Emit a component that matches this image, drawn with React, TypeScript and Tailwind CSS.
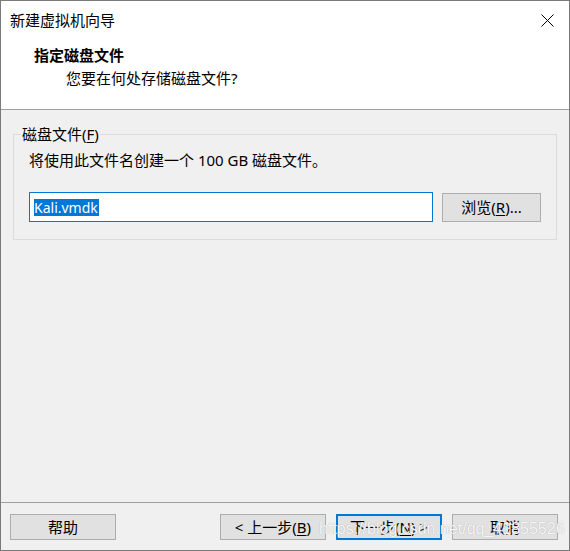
import React from 'react'

const font = "font-['Noto_Sans','Noto_Sans_CJK_SC',sans-serif]"

function Mn({ children }: { children: React.ReactNode }) {
  return <span className="underline underline-offset-2">{children}</span>
}

function Btn({ children, primary }: { children: React.ReactNode; primary?: boolean }) {
  return (
    <button
      className={
        primary
          ? 'w-[106px] h-[26px] bg-[#e1e1e1] border-2 border-[#0078d7] text-[15px] leading-none text-black flex items-center justify-center'
          : 'w-[106px] h-[26px] bg-[#e1e1e1] border border-[#adadad] text-[15px] leading-none text-black flex items-center justify-center'
      }
    >
      {children}
    </button>
  )
}

export default function App() {
  return (
    <div className={`${font} relative w-[570px] h-[551px] border border-[#7a7a7a] bg-[#f0f0f0] flex flex-col text-black`}>
      {/* header */}
      <div className="bg-white h-[109px] border-b border-[#a0a0a0] flex flex-col shrink-0">
        <div className="h-[38px] flex items-center justify-between pl-[9px] pr-[15px]">
          <span className="text-[15px] leading-5">新建虚拟机向导</span>
          <svg width="13" height="13" viewBox="0 0 13 13" className="mt-[1px]">
            <path d="M0.5 0.5 L12.5 12.5 M12.5 0.5 L0.5 12.5" stroke="#000" strokeWidth="1" />
          </svg>
        </div>
        <div className="mt-[6px] pl-[33px] text-[15px] leading-5 font-bold">指定磁盘文件</div>
        <div className="mt-[3px] pl-[65px] text-[15px] leading-5">您要在何处存储磁盘文件?</div>
      </div>

      {/* body */}
      <div className="flex-1 px-[12px] pt-[24px]">
        <div className="relative border border-[#dcdcdc] pl-[15px] pr-[15px] pt-[15px] pb-[17px]">
          <span className="absolute left-[7px] top-[-11px] bg-[#f0f0f0] px-[1px] text-[15px] leading-5">
            磁盘文件(<Mn>F</Mn>)
          </span>
          <div className="text-[15px] leading-5">将使用此文件名创建一个 100 GB 磁盘文件。</div>
          <div className="mt-[22px] flex items-center gap-[9px]">
            <div className="w-[404px] h-[30px] bg-white border border-[#0078d7] flex items-center pl-[4px]">
              <span className="bg-[#0078d7] text-white text-[14px] leading-[17px] pr-[1px]">Kali.vmdk</span>
            </div>
            <button className="w-[99px] h-[29px] bg-[#e1e1e1] border border-[#adadad] text-[15px] leading-none flex items-center justify-center">
              浏览(<Mn>R</Mn>)...
            </button>
          </div>
        </div>
      </div>

      {/* footer */}
      <div className="h-[48px] border-t border-[#a0a0a0] shrink-0 flex items-start pt-[11px] pl-[9px] pr-[11px]">
        <Btn>帮助</Btn>
        <div className="flex-1" />
        <div className="flex gap-[10px]">
          <Btn>
            &lt; 上一步(<Mn>B</Mn>)
          </Btn>
          <Btn primary>
            下一步(<Mn>N</Mn>) &gt;
          </Btn>
          <Btn>取消</Btn>
        </div>
      </div>

      {/* watermark */}
      <span className="absolute left-[318px] top-[516px] font-['Liberation_Sans',sans-serif] text-[16px] text-white/90 [text-shadow:0_0_1px_#9a9a9a] pointer-events-none whitespace-nowrap">
        https://blog.csdn.net/qq_41855526
      </span>
    </div>
  )
}
